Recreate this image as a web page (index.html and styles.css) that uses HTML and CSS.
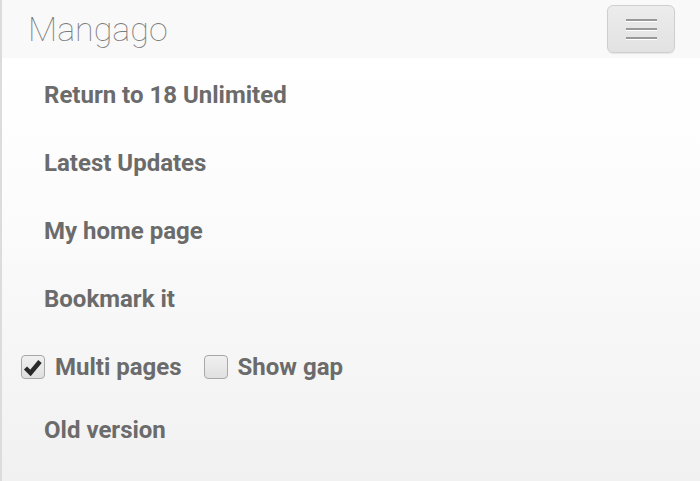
FILE: index.html
```html
<!DOCTYPE html>
<html>
<head>
<meta charset="utf-8">
<link rel="stylesheet" href="styles.css">
</head>
<body>
<div class="page">
  <header class="topbar">
    <div class="brand">Mangago</div>
    <button class="toggle" aria-label="menu">
      <span class="bar"></span><span class="bar"></span><span class="bar"></span>
    </button>
  </header>
  <nav class="menu">
    <div class="item">Return to 18 Unlimited</div>
    <div class="item">Latest Updates</div>
    <div class="item">My home page</div>
    <div class="item">Bookmark it</div>
    <div class="item checks">
      <label class="check"><span class="box"><svg viewBox="0 0 22 22" width="22" height="22"><path d="M3.5 12 L8.5 17 L18 5.5" fill="none" stroke="#2a2a2a" stroke-width="4.5" stroke-linejoin="miter" stroke-linecap="butt"/></svg></span>Multi pages</label>
      <label class="check"><span class="box"></span>Show gap</label>
    </div>
    <div class="item">Old version</div>
  </nav>
</div>
</body>
</html>
```

FILE: styles.css
```css
html, body { margin: 0; padding: 0; }
body {
  width: 700px;
  height: 481px;
  overflow: hidden;
  font-family: Roboto, "Liberation Sans", sans-serif;
}
.page {
  height: 481px;
  border-left: 2px solid #dcdcdc;
  background: linear-gradient(#ffffff 60px, #fcfcfc 200px, #f1f1f1 481px);
  box-sizing: border-box;
}
.topbar {
  height: 58px;
  background: #f9f9f9;
  display: flex;
  align-items: flex-start;
  justify-content: space-between;
  padding: 0 25px 0 26px;
}
.brand {
  font-weight: 100;
  font-size: 34px;
  color: #7c7c7c;
  line-height: 1;
  padding-top: 12px;
}
.toggle {
  margin-top: 5px;
  width: 68px;
  height: 48px;
  border: 1px solid #cfcfcf;
  border-radius: 6px;
  background: linear-gradient(#ececec, #e2e2e2);
  box-shadow: 0 1px 1px rgba(0,0,0,0.08);
  display: flex;
  flex-direction: column;
  align-items: center;
  justify-content: center;
  gap: 7px;
  padding: 0;
}
.bar {
  display: block;
  width: 31px;
  height: 2px;
  background: #999;
  box-shadow: 0 1px 0 #fff;
}
.menu {
  display: flex;
  flex-direction: column;
  padding-top: 23px;
}
.item {
  font-weight: 700;
  font-size: 24px;
  color: #6b6b6b;
  padding-left: 42px;
  height: 68px;
  line-height: 28px;
}
.checks {
  display: flex;
  gap: 0 22px;
  padding-left: 19px;
  height: 63px;
}
.check {
  display: flex;
  align-items: center;
  gap: 10px;
  height: 28px;
}
.box {
  width: 22px;
  height: 22px;
  border: 1px solid #a8a8a8;
  border-radius: 4px;
  background: linear-gradient(#f0f0f0, #e0e0e0);
  display: flex;
  align-items: center;
  justify-content: center;
}
.box svg { display: block; }
```
